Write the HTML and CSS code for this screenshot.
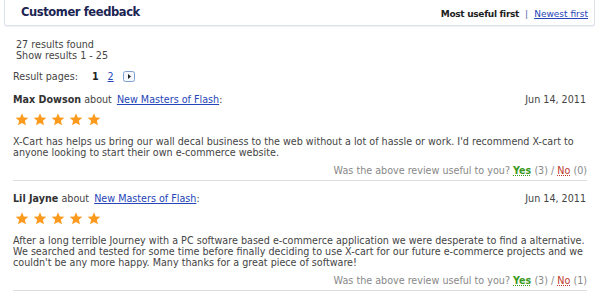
FILE: index.html
```html
<!DOCTYPE html>
<html lang="en">
<head>
    <meta charset="UTF-8">
    <title>Customer feedback</title>
    <link rel="stylesheet" href="styles.css">
</head>
<body>
    <div class="dialog">
        <div class="dialog-head">
            <h2>Customer feedback</h2>
            <div class="sort">
                <b>Most useful first</b>
                <span class="sep">|</span>
                <a href="#">Newest first</a>
            </div>
        </div>

        <div class="summary">
            27 results found<br>
            Show results 1 - 25
        </div>

        <div class="pages">
            <span class="pages-label">Result pages:</span>
            <b>1</b>
            <a href="#">2</a>
            <a href="#" class="next">
                <svg width="12" height="11" viewBox="0 0 12 11">
                    <rect x="0.5" y="0.5" width="11" height="10" rx="2" fill="#f4f8fd" stroke="#7d9fcf"/>
                    <path d="M5 3 L8 5.5 L5 8 Z" fill="#222"/>
                </svg>
            </a>
        </div>

        <div class="review">
            <div class="review-head">
                <div><b>Max Dowson</b> about <a href="#">New Masters of Flash</a>:</div>
                <div class="date">Jun 14, 2011</div>
            </div>
            <div class="stars">
                <svg class="star" viewBox="0 0 20 19"><path d="M10 0.5 L12.6 6.6 L19.3 7.1 L14.2 11.5 L15.8 18 L10 14.5 L4.2 18 L5.8 11.5 L0.7 7.1 L7.4 6.6 Z"/></svg>
                <svg class="star" viewBox="0 0 20 19"><path d="M10 0.5 L12.6 6.6 L19.3 7.1 L14.2 11.5 L15.8 18 L10 14.5 L4.2 18 L5.8 11.5 L0.7 7.1 L7.4 6.6 Z"/></svg>
                <svg class="star" viewBox="0 0 20 19"><path d="M10 0.5 L12.6 6.6 L19.3 7.1 L14.2 11.5 L15.8 18 L10 14.5 L4.2 18 L5.8 11.5 L0.7 7.1 L7.4 6.6 Z"/></svg>
                <svg class="star" viewBox="0 0 20 19"><path d="M10 0.5 L12.6 6.6 L19.3 7.1 L14.2 11.5 L15.8 18 L10 14.5 L4.2 18 L5.8 11.5 L0.7 7.1 L7.4 6.6 Z"/></svg>
                <svg class="star" viewBox="0 0 20 19"><path d="M10 0.5 L12.6 6.6 L19.3 7.1 L14.2 11.5 L15.8 18 L10 14.5 L4.2 18 L5.8 11.5 L0.7 7.1 L7.4 6.6 Z"/></svg>
            </div>
            <p class="review-text">X-Cart has helps us bring our wall decal business to the web without a lot of hassle or work. I'd recommend X-cart to anyone looking to start their own e-commerce website.</p>
            <div class="useful">
                Was the above review useful to you?
                <a href="#" class="yes">Yes</a> (3) /
                <a href="#" class="no">No</a> (0)
            </div>
        </div>

        <div class="review">
            <div class="review-head">
                <div><b>Lil Jayne</b> about <a href="#">New Masters of Flash</a>:</div>
                <div class="date">Jun 14, 2011</div>
            </div>
            <div class="stars">
                <svg class="star" viewBox="0 0 20 19"><path d="M10 0.5 L12.6 6.6 L19.3 7.1 L14.2 11.5 L15.8 18 L10 14.5 L4.2 18 L5.8 11.5 L0.7 7.1 L7.4 6.6 Z"/></svg>
                <svg class="star" viewBox="0 0 20 19"><path d="M10 0.5 L12.6 6.6 L19.3 7.1 L14.2 11.5 L15.8 18 L10 14.5 L4.2 18 L5.8 11.5 L0.7 7.1 L7.4 6.6 Z"/></svg>
                <svg class="star" viewBox="0 0 20 19"><path d="M10 0.5 L12.6 6.6 L19.3 7.1 L14.2 11.5 L15.8 18 L10 14.5 L4.2 18 L5.8 11.5 L0.7 7.1 L7.4 6.6 Z"/></svg>
                <svg class="star" viewBox="0 0 20 19"><path d="M10 0.5 L12.6 6.6 L19.3 7.1 L14.2 11.5 L15.8 18 L10 14.5 L4.2 18 L5.8 11.5 L0.7 7.1 L7.4 6.6 Z"/></svg>
                <svg class="star" viewBox="0 0 20 19"><path d="M10 0.5 L12.6 6.6 L19.3 7.1 L14.2 11.5 L15.8 18 L10 14.5 L4.2 18 L5.8 11.5 L0.7 7.1 L7.4 6.6 Z"/></svg>
            </div>
            <p class="review-text">After a long terrible Journey with a PC software based e-commerce application we were desperate to find a alternative. We searched and tested for some time before finally deciding to use X-cart for our future e-commerce projects and we couldn't be any more happy. Many thanks for a great piece of software!</p>
            <div class="useful">
                Was the above review useful to you?
                <a href="#" class="yes">Yes</a> (3) /
                <a href="#" class="no">No</a> (1)
            </div>
        </div>
    </div>
</body>
</html>
```

FILE: styles.css
```css
body {
    margin: 0;
    font-family: "DejaVu Sans", Verdana, sans-serif;
    font-size: 9.6px;
    line-height: 11px;
    color: #444;
    background: #fff;
}

a {
    color: #2545b8;
}

.dialog {
    width: 600px;
}

.dialog-head {
    display: flex;
    justify-content: space-between;
    align-items: center;
    height: 25px;
    margin: 0 5px 0 4px;
    padding: 0 6px 0 16px;
    border: 1px solid #dde2ea;
    border-top: none;
    border-radius: 0 0 3px 3px;
    box-shadow: 0 1px 1px #eef1f5;
}

.dialog-head h2 {
    margin: 0;
    font-size: 11.5px;
    letter-spacing: -0.4px;
    font-weight: bold;
    color: #1b2452;
}

.sort {
    display: flex;
    align-items: center;
    gap: 6px;
    padding-top: 4px;
    font-size: 9px;
}

.sort b {
    color: #222;
    letter-spacing: -0.3px;
}

.sep {
    color: #5568a8;
}

.summary {
    padding: 13px 0 0 16px;
}

.pages {
    display: flex;
    align-items: center;
    gap: 9px;
    padding: 10px 0 0 13px;
}

.pages-label {
    margin-right: 5px;
}

.pages b {
    color: #222;
}

.next {
    display: flex;
}

.review {
    margin: 0 13px;
    padding-top: 12px;
    padding-bottom: 4px;
    border-bottom: 1px solid #dedede;
}

.review-head {
    display: flex;
    justify-content: space-between;
}

.review-head b {
    color: #333;
}

.review-head a {
    margin-left: 2px;
}

.date {
    margin-right: 1px;
}

.stars {
    display: flex;
    gap: 4px;
    margin: 8px 0 0 2px;
}

.star {
    width: 14px;
    height: 13px;
    fill: #fb9a1c;
}

.review-text {
    margin: 10px 0 0;
}

.useful {
    margin-top: 7px;
    text-align: right;
    color: #888;
}

.useful a {
    text-decoration: underline dotted;
}

.yes {
    color: #3a9a22;
    font-weight: bold;
}

.no {
    color: #c0392b;
}
```
